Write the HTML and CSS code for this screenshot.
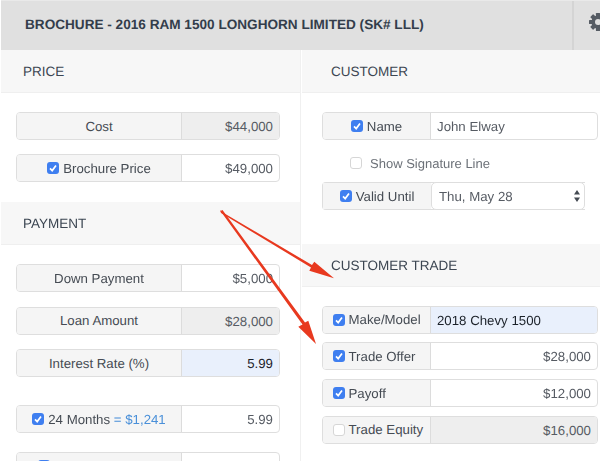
FILE: index.html
```html
<!DOCTYPE html>
<html lang="en">
<head>
<meta charset="utf-8">
<title>Brochure</title>
<link rel="stylesheet" href="styles.css">
</head>
<body>
<svg width="0" height="0" class="defs">
  <symbol id="tick" viewBox="0 0 12 12"><path d="M3 6.3 5.2 8.6 9 3.6" fill="none" stroke="#fff" stroke-width="1.7"/></symbol>
</svg>
<div class="app">
  <header class="topbar">
    <h1 class="title">BROCHURE - 2016 RAM 1500 LONGHORN LIMITED (SK# LLL)</h1>
    <div class="tool">
      <svg class="gear" width="18" height="18" viewBox="0 0 18 18">
        <g fill="#565c64">
          <rect x="6.9" y="0" width="4.2" height="18" rx=".6"/>
          <rect x="6.9" y="0" width="4.2" height="18" rx=".6" transform="rotate(45 9 9)"/>
          <rect x="6.9" y="0" width="4.2" height="18" rx=".6" transform="rotate(90 9 9)"/>
          <rect x="6.9" y="0" width="4.2" height="18" rx=".6" transform="rotate(135 9 9)"/>
          <circle cx="9" cy="9" r="6.6"/>
        </g>
        <circle cx="9" cy="9" r="3" fill="#e0e0e0"/>
      </svg>
    </div>
  </header>
  <main class="columns">
    <section class="col col-left">
      <h2 class="head">PRICE</h2>
      <div class="body price-body">
        <div class="row"><div class="lab">Cost</div><div class="val ro">$44,000</div></div>
        <div class="row"><div class="lab"><span class="cb on"><svg><use href="#tick"/></svg></span>Brochure Price</div><div class="val">$49,000</div></div>
      </div>
      <h2 class="head">PAYMENT</h2>
      <div class="body pay-body">
        <div class="row"><div class="lab">Down Payment</div><div class="val">$5,000</div></div>
        <div class="row"><div class="lab">Loan Amount</div><div class="val ro">$28,000</div></div>
        <div class="row"><div class="lab">Interest Rate (%)</div><div class="val hi">5.99</div></div>
        <div class="row term"><div class="lab"><span class="cb on"><svg><use href="#tick"/></svg></span>24 Months <span class="blue">= $1,241</span></div><div class="val">5.99</div></div>
        <div class="row term2"><div class="lab"><span class="cb on"><svg><use href="#tick"/></svg></span>36 Months <span class="blue">= $851</span></div><div class="val">5.99</div></div>
      </div>
    </section>
    <section class="col col-right">
      <h2 class="head">CUSTOMER</h2>
      <div class="body cust-body">
        <div class="row wide"><div class="lab"><span class="cb on"><svg><use href="#tick"/></svg></span>Name</div><div class="val txt">John Elway</div></div>
        <label class="sig"><span class="cb off"></span>Show Signature Line</label>
        <div class="row wide narrow"><div class="lab"><span class="cb on"><svg><use href="#tick"/></svg></span>Valid Until</div><div class="val sel">Thu, May 28<svg class="updown" width="6" height="12" viewBox="0 0 6 12"><path d="M3 0 6 4.6H0ZM3 12 0 7.4h6Z" fill="#444a52"/></svg></div></div>
      </div>
      <h2 class="head">CUSTOMER TRADE</h2>
      <div class="body trade-body">
        <div class="row wide left"><div class="lab"><span class="cb on"><svg><use href="#tick"/></svg></span>Make/Model</div><div class="val txt hi">2018 Chevy 1500</div></div>
        <div class="row wide left"><div class="lab"><span class="cb on"><svg><use href="#tick"/></svg></span>Trade Offer</div><div class="val">$28,000</div></div>
        <div class="row wide left"><div class="lab"><span class="cb on"><svg><use href="#tick"/></svg></span>Payoff</div><div class="val">$12,000</div></div>
        <div class="row wide left"><div class="lab"><span class="cb off"></span>Trade Equity</div><div class="val ro">$16,000</div></div>
      </div>
    </section>
  </main>
  <svg class="arrows" width="600" height="461" viewBox="0 0 600 461">
    <g fill="#e8391f" stroke="none">
      <path d="M220 210 222 212 312 265 314.3 261.7 334 278.3 309.3 270.7 311 267.5 221 213Z"/>
      <path d="M220.5 211 222.5 210 305 322.5 308.3 320.7 316 344 298.3 326.7 302.5 324.5Z"/>
    </g>
  </svg>
</div>
</body>
</html>
```
FILE: styles.css
```css
* { box-sizing: border-box; }
html, body { margin: 0; padding: 0; background: #fff; }
body { width: 600px; height: 461px; overflow: hidden; font-family: "Liberation Sans", Arial, sans-serif; font-size: 13.25px; color: #454b53; text-rendering: geometricPrecision; }
.defs { position: absolute; }
.app { position: relative; width: 600px; height: 461px; overflow: hidden; padding-left: 1px; filter: blur(.35px); }

.topbar { display: flex; height: 50px; background: #e0e0e0; border-top: 1px solid #e9e9e9; }
.title { flex: 1; margin: 0; padding-left: 24px; font-size: 13.6px; line-height: 47px; font-weight: 700; color: #333d4b; white-space: nowrap; }
.tool { width: 28px; flex: none; border-left: 2px solid #d4d4d4; padding: 12px 0 0 15px; overflow: hidden; }
.gear { display: block; }

.columns { display: flex; }
.col-left { width: 300px; flex: none; border-right: 1px solid #f0f0f0; }
.col-right { flex: 1; margin-left: 1px; }

.head { margin: 0; height: 43px; padding-left: 22px; background: #f7f7f7; border-bottom: 1px solid #efefef; font-size: 13.5px; font-weight: 400; line-height: 43px; color: #3c4652; }
.col-right .head { padding-left: 29px; }

.body { display: flex; flex-direction: column; align-items: flex-start; }
.price-body { padding: 19px 0 20px 15px; gap: 14px; }
.pay-body { padding: 19px 0 0 15px; gap: 14.5px; }
.cust-body { padding: 19px 0 34px 20px; }
.trade-body { padding: 18.7px 0 0 20px; gap: 8.7px; }

.row { display: flex; width: 264px; height: 28px; border: 1px solid #dedede; border-radius: 4px; background: #fff; line-height: 27px; overflow: hidden; flex: none; }
.term { margin-top: 13.5px; }
.term2 { margin-top: 4.5px; }
.lab { width: 165px; flex: none; display: flex; justify-content: center; align-items: center; background: #f5f5f5; border-right: 1px solid #dcdcdc; white-space: pre; color: #454b53; }
.val { flex: 1; text-align: right; padding-right: 6px; color: #565b63; }
.ro { background: #eeeeee; }
.hi { background: #e9f0fc; color: #1c222a; }
.blue { color: #4a90d9; }

.wide { width: 276px; }
.wide .lab { width: 108px; }
.left .lab { justify-content: flex-start; padding-left: 10px; }
.txt { text-align: left; padding-left: 6px; padding-right: 0; }
.narrow { width: 263px; overflow: visible; border-right: 0; border-radius: 4px 0 0 4px; }
.narrow .lab { border-right: 0; }
.sel { display: flex; justify-content: space-between; align-items: center; padding: 0 4px 0 7px; border: 1px solid #dedede; border-radius: 5px; margin: -1px 0; background: #fff; color: #565b63; }

.sig { display: flex; align-items: center; height: 42px; padding: 4px 0 0 28px; color: #6c7178; font-size: 13px; }
.sig .cb { margin-right: 8px; }

.cb { display: inline-block; width: 12px; height: 12px; margin-right: 4px; border-radius: 3px; flex: none; }
.left .cb { margin-right: 3.5px; }
.cb svg { display: block; width: 12px; height: 12px; }
.on { background: #3f7ff0; }
.off { background: #fff; border: 1px solid #d6d6d6; }

.arrows { position: absolute; left: 0; top: 0; pointer-events: none; }
```
